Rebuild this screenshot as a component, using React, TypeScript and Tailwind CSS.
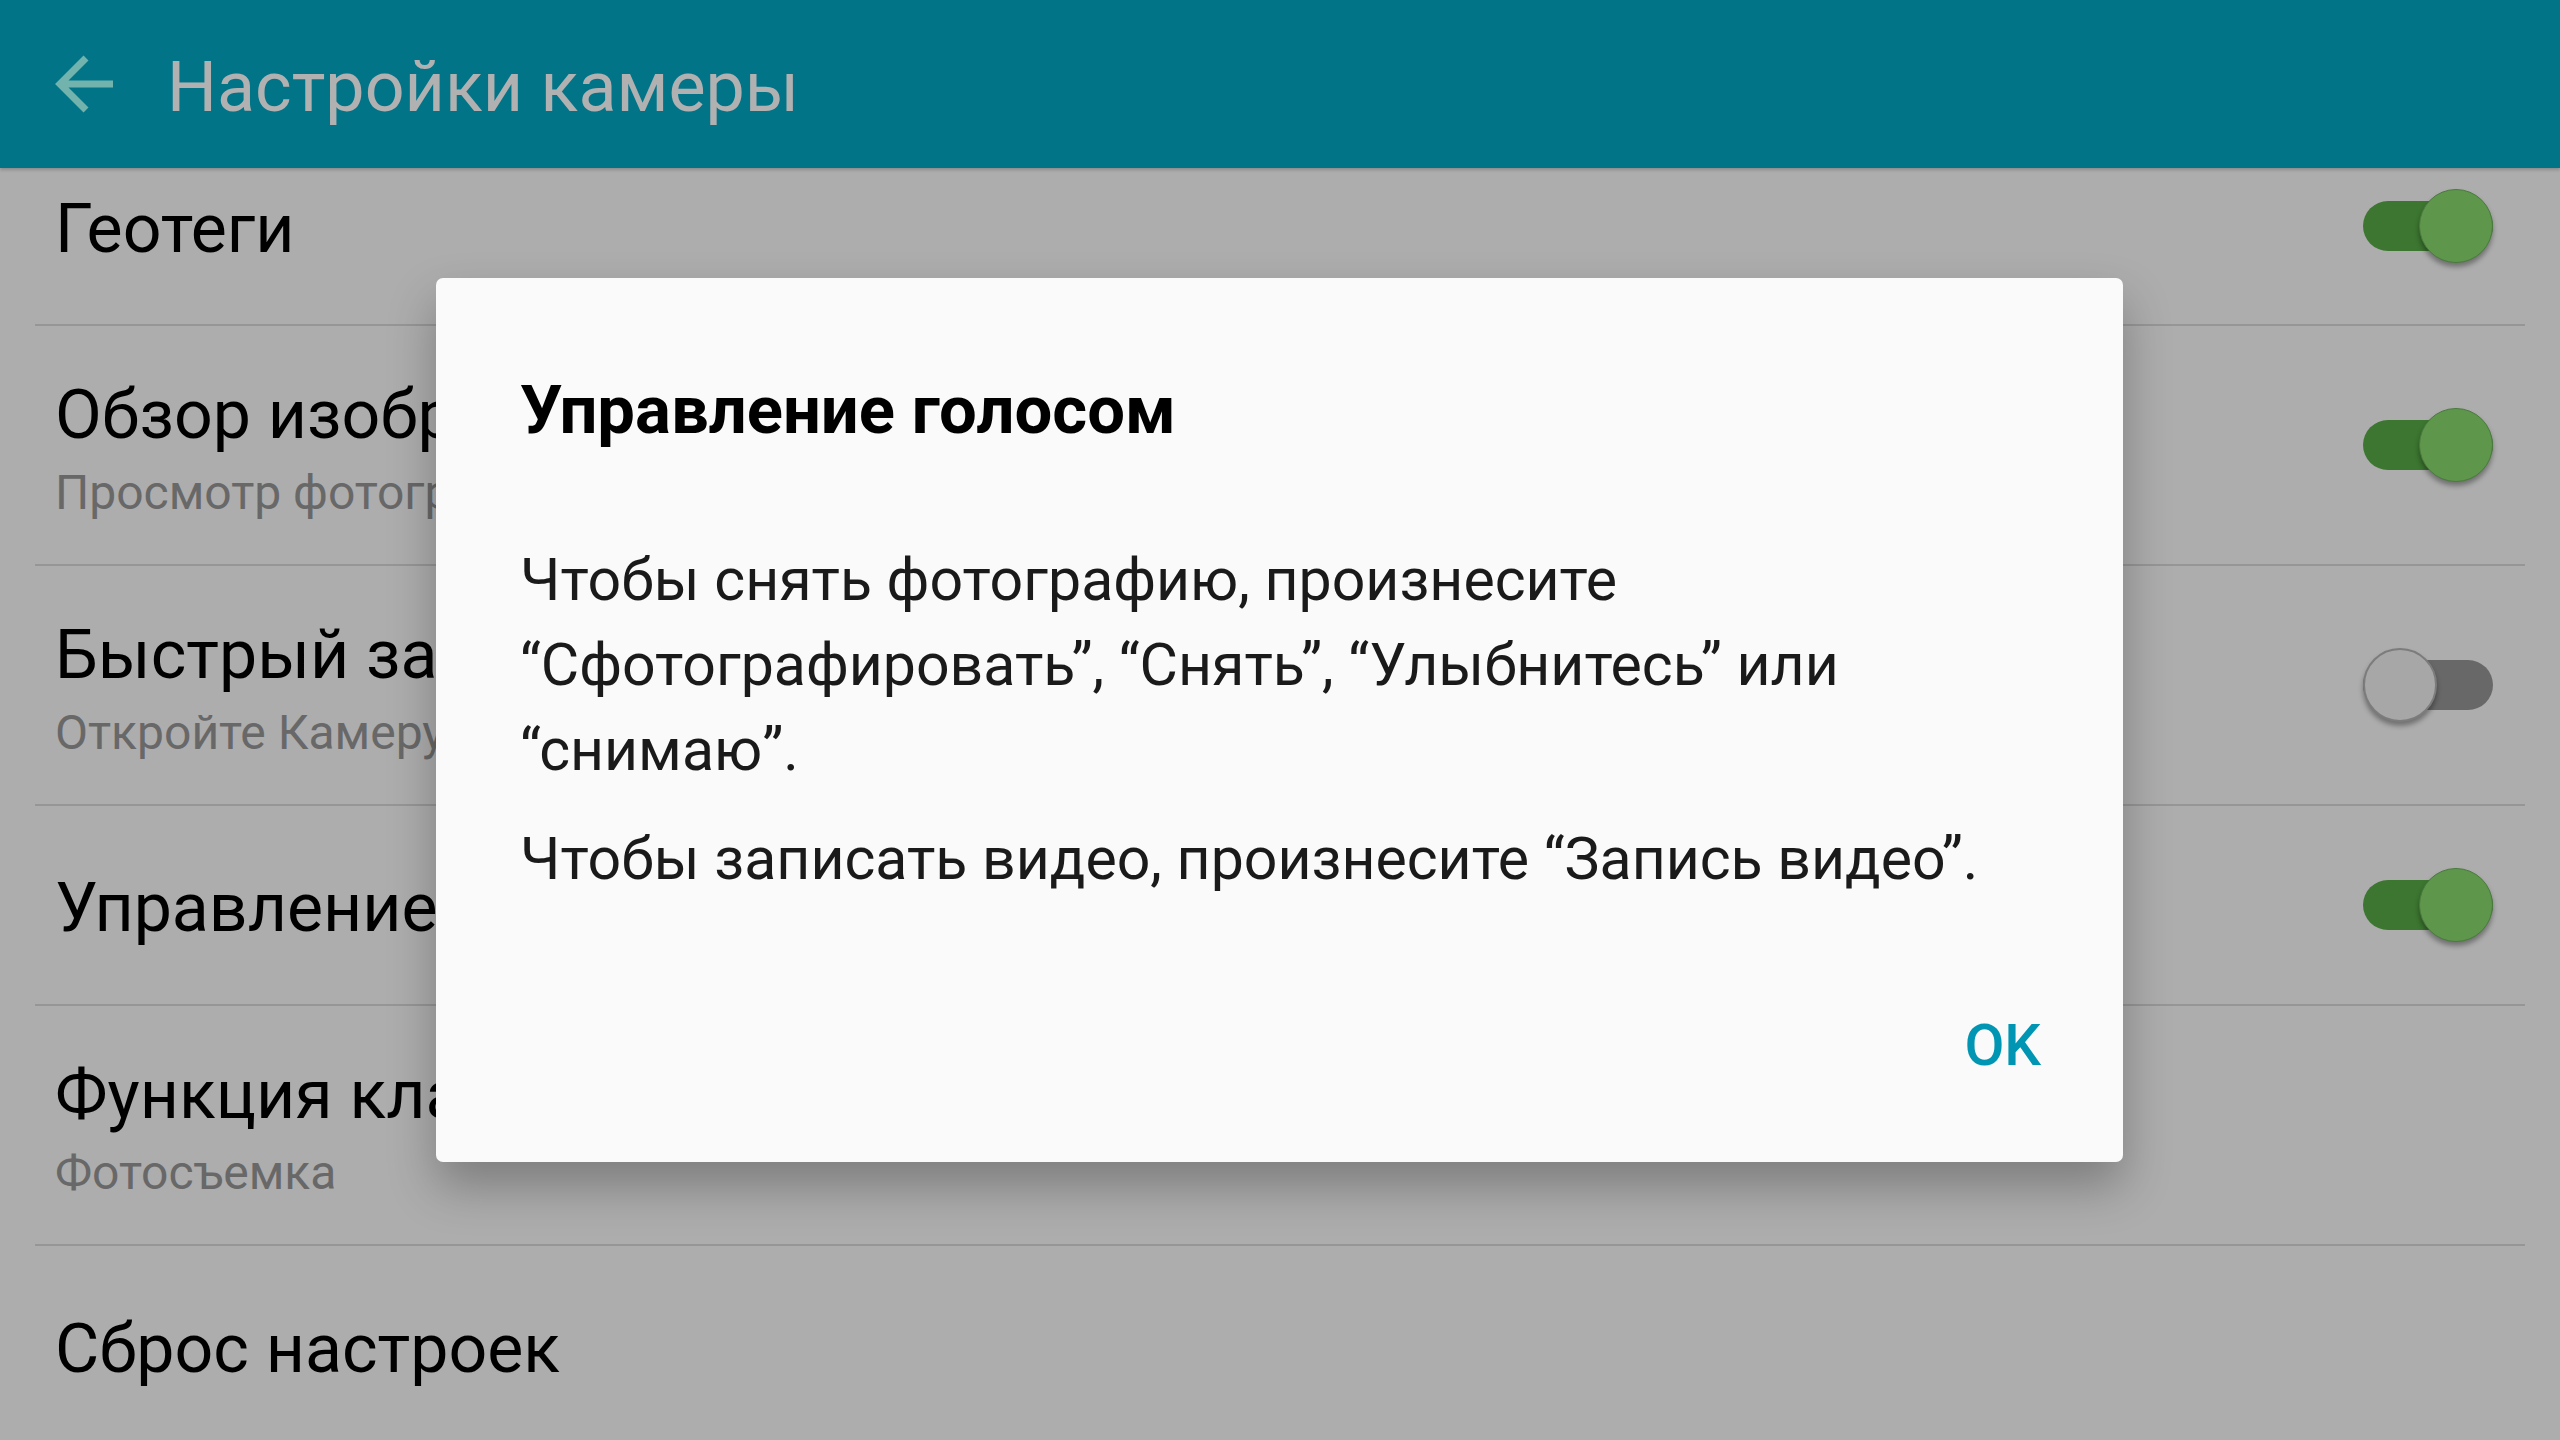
import React from "react";

function Toggle({ on }: { on: boolean }) {
  return (
    <div className="relative h-[74px] w-[130px] shrink-0">
      <div
        className={
          on
            ? "absolute left-0 right-0 top-[12px] h-[50px] rounded-full bg-[#3c7630]"
            : "absolute left-0 right-0 top-[12px] h-[50px] rounded-full bg-[#686868]"
        }
      />
      <div
        className={
          on
            ? "absolute right-0 top-0 h-[74px] w-[74px] rounded-full border border-[#4a7a3e] bg-[#5e964c] shadow-[0_4px_5px_rgba(0,0,0,0.35)]"
            : "absolute left-0 top-0 h-[74px] w-[74px] rounded-full border-2 border-[#7c7c7c] bg-[#a7a7a7] shadow-[0_4px_5px_rgba(0,0,0,0.35)]"
        }
      />
    </div>
  );
}

function Row({
  title,
  sub,
  toggle,
  h,
  first,
  last,
}: {
  title: string;
  sub?: string;
  toggle?: boolean;
  h: string;
  first?: boolean;
  last?: boolean;
}) {
  return (
    <div
      className={[
        "flex justify-between pl-[20px] pr-[32px]",
        h,
        first ? "items-start pt-[21px]" : "items-center",
        last ? "" : "border-b-2 border-[#969696]",
      ].join(" ")}
    >
      <div className={first ? "flex flex-col whitespace-nowrap" : "flex flex-col whitespace-nowrap pt-[5px]"}>
        <div className="text-[68px] leading-[80px] text-black">{title}</div>
        {sub && (
          <div className="mt-[10px] text-[48px] leading-[56px] text-[#686868]">{sub}</div>
        )}
      </div>
      {toggle !== undefined && <Toggle on={toggle} />}
    </div>
  );
}

export default function App() {
  return (
    <div className="relative h-[1440px] w-[2560px] overflow-hidden bg-[#adadad] font-['Roboto','Noto_Sans',sans-serif]">
      <header className="relative z-10 flex h-[168px] items-center bg-[#027488] pt-[6px] shadow-[0_2px_3px_rgba(0,0,0,0.2)]">
        <svg className="ml-[52px] h-[64px] w-[64px]" viewBox="0 0 64 64" fill="none">
          <path
            d="M61 29H8M34 3L8 29L34 55"
            stroke="#72b3ad"
            strokeWidth="7"
            strokeLinecap="butt"
            strokeLinejoin="miter"
          />
        </svg>
        <div className="ml-[51px] text-[70px] leading-[82px] text-[#b1b1b1]">Настройки камеры</div>
      </header>

      <div className="mx-[35px] flex flex-col">
        <Row first h="h-[158px]" title="Геотеги" toggle={true} />
        <Row h="h-[240px]" title="Обзор изображений" sub="Просмотр фотографий после съемки" toggle={true} />
        <Row h="h-[240px]" title="Быстрый запуск" sub="Откройте Камеру двойным нажатием клавиши" toggle={false} />
        <Row h="h-[200px]" title="Управление голосом" toggle={true} />
        <Row h="h-[240px]" title="Функция клавиши громкости" sub="Фотосъемка" />
        <Row last h="h-[200px]" title="Сброс настроек" />
      </div>

      <div className="absolute left-[436px] top-[278px] flex w-[1687px] flex-col rounded-[7px] bg-[#fafafa] pl-[84px] pr-[82px] pb-[74px] pt-[92px] shadow-[0_24px_48px_rgba(0,0,0,0.28)]">
        <div className="text-[67px] font-bold leading-[80px] text-black">Управление голосом</div>
        <div className="mt-[87px] whitespace-nowrap text-[59px] leading-[85px] text-[#1a1a1a]">
          Чтобы снять фотографию, произнесите
          <br />
          “Сфотографировать”, “Снять”, “Улыбнитесь” или
          <br />
          “снимаю”.
        </div>
        <div className="mt-[24px] whitespace-nowrap text-[59px] leading-[85px] text-[#1a1a1a]">
          Чтобы записать видео, произнесите “Запись видео”.
        </div>
        <div className="mt-[102px] flex justify-end">
          <div className="text-[58px] font-medium leading-[85px] text-[#0096b3]">OK</div>
        </div>
      </div>
    </div>
  );
}
